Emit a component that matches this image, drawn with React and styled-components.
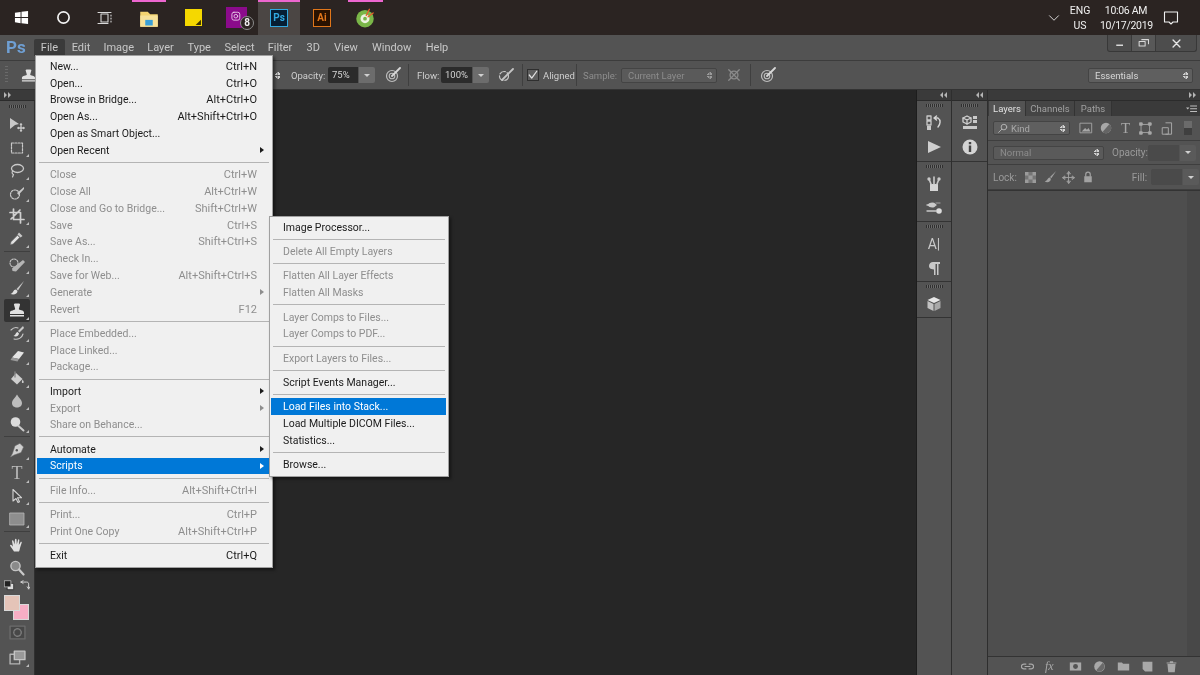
import React from "react";
import styled, { createGlobalStyle } from "styled-components";

const GlobalStyle = createGlobalStyle`
  html, body {
    margin: 0;
    padding: 0;
    background: #262626;
  }
  * {
    box-sizing: border-box;
  }
`;

const UI_FONT = `Roboto, "Noto Sans", "Liberation Sans", sans-serif`;

const Shell = styled.div`
  position: relative;
  width: 1200px;
  height: 675px;
  overflow: hidden;
  display: flex;
  flex-direction: column;
  font-family: ${UI_FONT};
  filter: blur(0.3px);
`;

/* ---------- windows taskbar ---------- */

const Taskbar = styled.div`
  height: 35px;
  flex: none;
  display: flex;
  background: #2b2422;
  color: #f0f0f0;
`;

const TaskSlot = styled.div`
  position: relative;
  width: ${(p) => p.$w}px;
  display: flex;
  align-items: center;
  justify-content: center;
  background: ${(p) => (p.$active ? "#4b4644" : "transparent")};

  &::before {
    content: "";
    display: ${(p) => (p.$bar ? "block" : "none")};
    position: absolute;
    top: 0;
    left: 50%;
    width: ${(p) => p.$bar}px;
    height: 2px;
    margin-left: ${(p) => -p.$bar / 2}px;
    background: #ec66cf;
  }
`;

const Badge = styled.span`
  position: absolute;
  left: 26px;
  top: 16px;
  width: 14px;
  height: 14px;
  border-radius: 50%;
  border: 1px solid #8c8c8c;
  background: #2b2422;
  color: #eee;
  font-size: 10px;
  font-weight: 700;
  line-height: 12px;
  text-align: center;
`;

const AppTile = styled.span`
  width: 18px;
  height: 18px;
  display: block;
  border: 1px solid ${(p) => p.$edge};
  background: ${(p) => p.$bg};
  color: ${(p) => p.$edge};
  font-size: 10px;
  font-weight: 700;
  line-height: 15px;
  text-align: center;
`;

const Tray = styled.div`
  margin-left: auto;
  display: flex;
  align-items: center;
  padding-right: 21px;
  font-size: 10.5px;
  line-height: 15px;
`;

const TrayText = styled.div`
  width: ${(p) => p.$w}px;
  margin-right: ${(p) => p.$mr || 0}px;
  letter-spacing: ${(p) => p.$ls || 0}px;
  text-align: center;
  white-space: nowrap;
`;

/* ---------- photoshop menu bar ---------- */

const MenuBar = styled.div`
  height: 25px;
  flex: none;
  display: flex;
  align-items: flex-start;
  background: #535353;
  color: #c8c8c8;
  font-size: 11px;
`;

const PsLogo = styled.span`
  width: 34px;
  padding: 1px 0 0 6px;
  color: #6f9fd3;
  font-size: 17px;
  font-weight: 700;
  line-height: 22px;
`;

const MenuName = styled.span`
  width: ${(p) => p.$w}px;
  height: 17px;
  margin-top: 4px;
  line-height: 17px;
  text-align: center;
  border-radius: 2px 2px 0 0;
  background: ${(p) => (p.$open ? "#3a3a3a" : "transparent")};
`;

const WindowButtons = styled.div`
  margin: 0 3px 0 auto;
  height: 17px;
  display: flex;
  background: #4d4d4d;
  border: 1px solid #383838;
  border-top: 0;
  border-radius: 0 0 3px 3px;
`;

const WindowButton = styled.span`
  width: ${(p) => p.$w}px;
  display: flex;
  align-items: center;
  justify-content: center;
  border-left: ${(p) => (p.$first ? "0" : "1px solid #3a3a3a")};
  background: ${(p) => (p.$lit ? "#585858" : "transparent")};
`;

/* ---------- options bar ---------- */

const OptionsBar = styled.div`
  height: 30px;
  flex: none;
  display: flex;
  align-items: center;
  background: #535353;
  border-top: 1px solid #3c3c3c;
  border-bottom: 1px solid #333;
  color: #cfcfcf;
  font-size: 9.5px;
`;

const Grip = styled.span`
  width: 3px;
  height: 18px;
  margin-left: 5px;
  background: repeating-linear-gradient(#6a6a6a 0 1px, transparent 1px 3px);
`;

const Option = styled.span`
  width: ${(p) => (p.$w ? `${p.$w}px` : "auto")};
  margin-left: ${(p) => p.$ml}px;
  flex: none;
  display: flex;
  align-items: center;
  color: ${(p) => (p.$dim ? "#8d8d8d" : "inherit")};
  white-space: nowrap;
`;

const ValueBox = styled.span`
  width: ${(p) => p.$w}px;
  height: 16px;
  margin-left: ${(p) => p.$ml || 0}px;
  padding-left: 4px;
  background: ${(p) => (p.$empty ? "#4a4a4a" : "#2b2b2b")};
  color: #d4d4d4;
  line-height: 16px;
  border-radius: 2px 0 0 2px;
`;

const DropButton = styled.span`
  width: 16px;
  height: 16px;
  margin-left: 1px;
  display: flex;
  align-items: center;
  justify-content: center;
  background: ${(p) => (p.$empty ? "#5a5a5a" : "#6c6c6c")};
  border-radius: 0 2px 2px 0;

  &::after {
    content: "";
    border-left: 3px solid transparent;
    border-right: 3px solid transparent;
    border-top: 3px solid #d0d0d0;
  }
`;

const Divider = styled.span`
  width: 1px;
  height: 22px;
  margin-left: ${(p) => p.$ml}px;
  background: #3f3f3f;
`;

const CheckBox = styled.span`
  width: 12px;
  height: 12px;
  margin-left: 4px;
  display: flex;
  align-items: center;
  justify-content: center;
  border: 1px solid #2f2f2f;
  background: #5e5e5e;
`;

const SelectBox = styled.span`
  width: ${(p) => p.$w}px;
  height: ${(p) => p.$h || 15}px;
  margin-left: ${(p) => p.$ml || 0}px;
  padding: 0 4px 0 ${(p) => p.$pad || 6}px;
  display: flex;
  align-items: center;
  justify-content: space-between;
  flex: none;
  border: 1px solid #444;
  border-radius: 2px;
  background: ${(p) => p.$bg || "#5a5a5a"};
  color: ${(p) => (p.$dim ? "#8c8c8c" : "#d8d8d8")};
  white-space: nowrap;
  font-size: 9.5px;
`;

const EndSlot = styled.span`
  margin: 0 7px 0 auto;
`;

const Spinner = styled.span`
  width: 5px;
  height: 9px;
  display: block;
  flex: none;
  opacity: ${(p) => (p.$dim ? 0.55 : 1)};
  background:
    linear-gradient(135deg, transparent 50%, #d0d0d0 50%) left top / 50% 4px no-repeat,
    linear-gradient(225deg, transparent 50%, #d0d0d0 50%) right top / 50% 4px no-repeat,
    linear-gradient(45deg, transparent 50%, #d0d0d0 50%) left bottom / 50% 4px no-repeat,
    linear-gradient(315deg, transparent 50%, #d0d0d0 50%) right bottom / 50% 4px no-repeat;
`;

/* ---------- workspace ---------- */

const Workspace = styled.div`
  flex: 1;
  min-height: 0;
  display: flex;
  background: #2e2e2e;
`;

const Column = styled.div`
  width: ${(p) => p.$w}px;
  flex: none;
  display: flex;
  flex-direction: column;
  margin-left: ${(p) => p.$ml || 0}px;
`;

const Strip = styled.div`
  height: 11px;
  flex: none;
  display: flex;
  align-items: center;
  justify-content: ${(p) => p.$align || "flex-end"};
  padding: 0 4px;
  background: #3a3a3a;
  border-bottom: 1px solid #2b2b2b;
`;

const Toolbar = styled.div`
  flex: 1;
  display: flex;
  flex-direction: column;
  align-items: center;
  background: #535353;
  border-right: 1px solid #303030;
`;

const HGrip = styled.span`
  width: 17px;
  height: 3px;
  flex: none;
  margin: ${(p) => p.$m || "5px 0 5px"};
  background: repeating-linear-gradient(90deg, #2f2f2f 0 1px, #6a6a6a 1px 2px);
`;

const ToolSlot = styled.div`
  position: relative;
  width: 26px;
  height: 22.7px;
  flex: none;
  margin-top: ${(p) => p.$mt || 0}px;
  display: flex;
  align-items: center;
  justify-content: center;
  border-radius: 2px;
  background: ${(p) => (p.$active ? "#333" : "transparent")};

  &::after {
    content: "";
    display: ${(p) => (p.$more ? "block" : "none")};
    position: absolute;
    right: 1px;
    bottom: 2px;
    border-left: 3px solid transparent;
    border-bottom: 3px solid #bdbdbd;
  }
`;

const ToolRule = styled.div`
  width: 26px;
  height: 3px;
  flex: none;
  margin-top: 1px;
  border-top: 1px solid #3f3f3f;
`;

const TypeGlyph = styled.span`
  font-family: "Liberation Serif", serif;
  font-size: ${(p) => p.$size || 18}px;
  line-height: 1;
  color: ${(p) => p.$color || "#b8b8b8"};
`;

const SwatchRow = styled.div`
  width: 26px;
  height: 13px;
  flex: none;
  display: flex;
  align-items: center;
  justify-content: space-between;
`;

const Swatches = styled.div`
  position: relative;
  width: 26px;
  height: 27px;
  flex: none;
  margin-top: 2px;
`;

const Swatch = styled.span`
  position: absolute;
  left: ${(p) => p.$x}px;
  top: ${(p) => p.$y}px;
  width: 16px;
  height: 16px;
  background: ${(p) => p.$bg};
  border: 1px solid #d9d9d9;
`;

const Canvas = styled.main`
  flex: 1;
  background: #262626;
  border-right: 1px solid #1d1d1d;
`;

const DockColumn = styled.div`
  flex: 1;
  display: flex;
  flex-direction: column;
  background: #535353;
`;

const DockGroup = styled.div`
  height: ${(p) => p.$h}px;
  flex: none;
  display: flex;
  flex-direction: column;
  align-items: center;
  border-bottom: 1px solid #333;
`;

const DockIcon = styled.div`
  height: 24px;
  flex: none;
  display: flex;
  align-items: center;
  justify-content: center;
`;

const LayersPanel = styled.div`
  flex: 1;
  display: flex;
  flex-direction: column;
  background: #535353;
  color: #b4b4b4;
  font-size: 10px;
`;

const TabRow = styled.div`
  height: 15px;
  flex: none;
  display: flex;
  align-items: stretch;
  background: #3a3a3a;
  padding-left: 1px;
`;

const Tab = styled.span`
  width: ${(p) => p.$w}px;
  display: flex;
  align-items: center;
  justify-content: center;
  background: ${(p) => (p.$active ? "#535353" : "#454545")};
  color: ${(p) => (p.$active ? "#e2e2e2" : "#a0a0a0")};
  border-right: 1px solid #333;
  font-size: 9.5px;
`;

const PanelRow = styled.div`
  height: ${(p) => p.$h}px;
  flex: none;
  display: flex;
  align-items: center;
  padding-left: 5px;
  border-bottom: 1px solid #3e3e3e;
`;

const PanelIcon = styled.span`
  margin-left: ${(p) => p.$ml}px;
  display: flex;
  opacity: ${(p) => p.$o || 1};
`;

const PanelLabel = styled.span`
  width: ${(p) => (p.$w ? `${p.$w}px` : "auto")};
  margin-left: ${(p) => p.$ml || 0}px;
  color: #9a9a9a;
`;

const MenuGlyph = styled.span`
  margin-left: auto;
  padding: 3px 3px 0 0;
`;

const KindLabel = styled.span`
  display: flex;
  align-items: center;
  gap: 3px;
  color: #a8a8a8;
`;

const FxLabel = styled.span`
  width: 13px;
  color: #a8a8a8;
  font-family: "Liberation Serif", serif;
  font-style: italic;
  font-size: 12px;
`;

const CharGlyph = styled.span`
  color: #c9c9c9;
  font-size: 14px;
  line-height: 1;
`;

const FilterToggle = styled.span`
  width: 8px;
  height: 14px;
  margin-left: 10px;
  background: linear-gradient(#6b6b6b 50%, #3f3f3f 50%);
`;

const ListArea = styled.div`
  flex: 1;
  display: flex;
  justify-content: flex-end;
  background: #4e4e4e;
  border-top: 1px solid #333;
  border-bottom: 1px solid #333;
`;

const ScrollTrack = styled.div`
  width: 13px;
  background: #484848;
`;

const PanelFooter = styled.div`
  height: 18px;
  flex: none;
  display: flex;
  align-items: center;
  padding-left: 33px;
  gap: 11px;
`;

/* ---------- dropdown menus ---------- */

const Dropdown = styled.div`
  position: absolute;
  left: ${(p) => p.$x}px;
  top: ${(p) => p.$y}px;
  width: ${(p) => p.$w}px;
  padding: ${(p) => p.$pt}px 2px 3px 1px;
  background: #f0f0f0;
  border: 1px solid #a0a0a0;
  box-shadow: 2px 2px 3px rgba(0, 0, 0, 0.45);
  font-size: 10.5px;
  color: #1b1b1b;
`;

const Row = styled.div`
  position: relative;
  height: 16.8px;
  display: flex;
  align-items: center;
  justify-content: space-between;
  padding: 0 ${(p) => p.$right}px 0 ${(p) => p.$left}px;
  background: ${(p) => (p.$hi ? "#0078d7" : "transparent")};
  color: ${(p) => (p.$hi ? "#fff" : p.$off ? "#8e8e8e" : "#1b1b1b")};
  white-space: nowrap;
`;

const Shortcut = styled.span`
  font-size: 11px;
`;

const Arrow = styled.span`
  position: absolute;
  right: 6px;
  top: 50%;
  margin-top: -3px;
  border-top: 3px solid transparent;
  border-bottom: 3px solid transparent;
  border-left: 4px solid ${(p) => (p.$hi ? "#fff" : p.$off ? "#8e8e8e" : "#1b1b1b")};
`;

const Rule = styled.div`
  height: 7.5px;
  margin: 0 1px 0 2px;
  display: flex;
  align-items: center;

  &::after {
    content: "";
    flex: 1;
    height: 1px;
    background: #b4b4b4;
  }
`;

/* ---------- drawings ---------- */

const Icon = ({ size = 16, children, fill = "#c9c9c9", stroke = "none", sw = 1.3 }) => (
  <svg width={size} height={size} viewBox="0 0 16 16" fill={fill} stroke={stroke} strokeWidth={sw} strokeLinecap="round" strokeLinejoin="round" style={{ display: "block", flex: "none" }}>
    {children}
  </svg>
);

const Chevrons = ({ left }) => (
  <svg width="7" height="6" viewBox="0 0 7 6" fill="#b5b5b5" style={{ transform: left ? "scaleX(-1)" : "none" }}>
    <path d="M0 0l3 3-3 3zM4 0l3 3-3 3z" />
  </svg>
);

const toolIcons = {
  move: <><path d="M1 1l9 6-4 1-5 4z" /><path d="M12 7v7M9 11h6" stroke="#c9c9c9" /><path d="M12 6l-1.500 2h3zM12 15l-1.500-2h3zM8 11l2-1.500v3zM16 11l-2-1.500v3z" /></>,
  marquee: <rect x="2.500" y="3" width="11" height="10" fill="none" stroke="#c9c9c9" strokeWidth="1.200" strokeDasharray="2 1.300" />,
  lasso: <><ellipse cx="8.500" cy="6.500" rx="6" ry="4" fill="none" stroke="#c9c9c9" strokeWidth="1.300" /><path d="M4 9c-1.500 1-1 3 .5 3.500L3.500 15" fill="none" stroke="#c9c9c9" strokeWidth="1.200" /></>,
  quick: <><circle cx="6" cy="9.500" r="4.500" fill="none" stroke="#c9c9c9" strokeWidth="1.200" strokeDasharray="1.600 1.200" /><path d="M15 2L8 8l1.500 2L15 4z" /></>,
  crop: <path d="M4.500 1v10.500H15M1 4.500h10.500V15M11 2l-9 9" fill="none" stroke="#d0d0d0" strokeWidth="1.700" />,
  eyedropper: <><path d="M10 2.500l3.500 3.500-2 1.500-3-3z" /><path d="M8.500 5.500l2 2L4 14l-2.500.5L2 12z" fill="#e2e2e2" stroke="#777" strokeWidth=".5" /></>,
  heal: <><circle cx="5" cy="6" r="4" fill="none" stroke="#c9c9c9" strokeWidth="1.100" strokeDasharray="1.500 1.200" /><path d="M14 3l2 2-9 9.500-3.500-.5-.5-2.500z" fill="#b5b5b5" /></>,
  brush: <><path d="M15 1L7.500 9l1.500 1.500z" /><path d="M7 9.500c-3 0-2.500 3.500-5.500 4.500 3.500 1 7 0 7-3z" fill="#e0e0e0" /></>,
  stamp: <path d="M6 1.500h4c1 0 1.300 1 .8 2L9.800 7c0 1.500 5.200.8 5.200 3.500V12H1v-1.500C1 8 6.200 8.500 6.200 7L5.200 3.500c-.5-1-.2-2 .8-2zM1 13h14v1.500H1z" fill="#e0e0e0" />,
  history: <><path d="M14 1L9 6l1.500 1.500L15 3z" /><path d="M8.500 7C6.500 7.500 7 10 4.500 11c2.500 1 5 .5 5.500-2.500z" fill="#e0e0e0" /><path d="M2 5c3-3 6-2.500 7-2M5 14c4 1 8-1 9-5" fill="none" stroke="#c9c9c9" strokeWidth="1.100" /></>,
  eraser: <><path d="M9 3l6 1.500L10 11 3 9.500z" fill="#e4e4e4" /><path d="M3 9.500L10 11l-1.500 2.500-7-1.500z" fill="#999" /></>,
  fill: <><path d="M7 3l6.500 6L8 14.500 2 9z" fill="#cfcfcf" /><path d="M13.500 9.500c1 1.500 1.800 2.800.8 3.500-1 .4-1.800-.6-1.300-1.800z" fill="#cfcfcf" /><path d="M6 7V2" stroke="#888" /></>,
  drop: <path d="M8 1.500c1.500 3 5 5.500 5 8.500 0 3-2.300 4.500-5 4.500S3 13 3 10c0-3 3.500-5.500 5-8.500z" fill="#bdbdbd" />,
  burn: <><circle cx="6.500" cy="6" r="4.800" fill="#dcdcdc" /><path d="M9.500 10l5 4.500" stroke="#c9c9c9" strokeWidth="2" /></>,
  pen: <><path d="M11 1.500l3.500 3.500-2.500 5.500L5 13 1.500 15l2-3.500L6 4z" fill="#cfcfcf" stroke="#777" strokeWidth=".5" /><circle cx="7.800" cy="8.200" r="1.200" fill="#555" /></>,
  arrow: <path d="M4 1.500v11.500l3-2.500 2 4 1.500-.8-2-4h4z" fill="#4a4a4a" stroke="#d5d5d5" strokeWidth="1.100" />,
  shape: <rect x="1" y="2" width="14" height="12" fill="#8e8e8e" stroke="#b8b8b8" strokeWidth=".8" />,
  hand: <path d="M5 14.500C4 12.500 1.500 10 1 8.500c0-1 1.200-1 2 0l1 1.200L3 4c0-1 1.200-1 1.500 0l1 3.500L6 2.500c.2-1 1.400-1 1.500 0l.3 5L9 3c.3-1 1.400-.8 1.300.2L9.800 8l1.700-2.800c.5-.8 1.600-.3 1.200.6L11 11c-.3 1.500-.5 2.500-1 3.500z" fill="#e0e0e0" />,
  zoom: <><circle cx="6.500" cy="6" r="4.600" fill="#8a8a8a" stroke="#c4c4c4" strokeWidth="1.400" /><path d="M10 9.500l4.500 5" stroke="#c9c9c9" strokeWidth="2.200" /></>,
};

const dockIcons = {
  history: <><path d="M1 1h4v4H1zM1 6h4v4H1z" fill="none" stroke="#c9c9c9" /><path d="M1 11h4v4H1z" fill="#c9c9c9" /><path d="M8 3h4c3 2 2.500 6 0 9M8 3l2.500-2M8 3l2.500 2" fill="none" stroke="#d5d5d5" strokeWidth="1.400" /></>,
  play: <path d="M2 2l13 6-13 6z" fill="#cfcfcf" />,
  box: <><path d="M5 1l4 2v4L5 9 1 7V3z" fill="none" stroke="#d0d0d0" /><path d="M1 3l4 2 4-2M5 5v4" fill="none" stroke="#d0d0d0" /><path d="M11 1h4v3h-4zM11 5h4v3h-4z" /><path d="M1 11h14v3H1z" /></>,
  info: <><circle cx="8" cy="8" r="7.500" fill="#d4d4d4" /><path d="M6.800 3h2.400v2.200H6.800zM6.800 6.500h2.400V13H6.800z" fill="#444" /></>,
  brushes: <><path d="M4 8h8v7H4z" fill="#d5d5d5" /><path d="M5 8L3 3M8 8V1M11 8l2-5" stroke="#c9c9c9" strokeWidth="1.600" /><circle cx="3" cy="3" r="1.700" /><circle cx="13" cy="3" r="1.700" /></>,
  presets: <><path d="M7 5H1M2 5c2-2 4-2 6-1.500L10 5 8 6.500C6 7 4 7 2 5z" stroke="#c9c9c9" /><path d="M1 11h9" stroke="#c9c9c9" strokeWidth="1.300" /><circle cx="13" cy="11" r="2.800" fill="#dcdcdc" /><path d="M10 3h4" stroke="#888" /></>,
  para: <path d="M7 2h7v2h-1.500v11H11V4H9.500v11H8V9.500C4 9.500 3 7.500 3 5.800 3 3.500 5 2 7 2z" fill="#c9c9c9" />,
  cube: <><path d="M8 1l6.500 3L8 7 1.500 4z" fill="#e6e6e6" /><path d="M1.500 5L7.500 8v7l-6-3z" fill="#c2c2c2" /><path d="M14.500 5L8.500 8v7l6-3z" fill="#a8a8a8" /></>,
};

const menuItems = [
  { t: "New...", k: "Ctrl+N" },
  { t: "Open...", k: "Ctrl+O" },
  { t: "Browse in Bridge...", k: "Alt+Ctrl+O" },
  { t: "Open As...", k: "Alt+Shift+Ctrl+O" },
  { t: "Open as Smart Object..." },
  { t: "Open Recent", sub: true },
  "-",
  { t: "Close", k: "Ctrl+W", off: true },
  { t: "Close All", k: "Alt+Ctrl+W", off: true },
  { t: "Close and Go to Bridge...", k: "Shift+Ctrl+W", off: true },
  { t: "Save", k: "Ctrl+S", off: true },
  { t: "Save As...", k: "Shift+Ctrl+S", off: true },
  { t: "Check In...", off: true },
  { t: "Save for Web...", k: "Alt+Shift+Ctrl+S", off: true },
  { t: "Generate", sub: true, off: true },
  { t: "Revert", k: "F12", off: true },
  "-",
  { t: "Place Embedded...", off: true },
  { t: "Place Linked...", off: true },
  { t: "Package...", off: true },
  "-",
  { t: "Import", sub: true },
  { t: "Export", sub: true, off: true },
  { t: "Share on Behance...", off: true },
  "-",
  { t: "Automate", sub: true },
  { t: "Scripts", sub: true, hi: true },
  "-",
  { t: "File Info...", k: "Alt+Shift+Ctrl+I", off: true },
  "-",
  { t: "Print...", k: "Ctrl+P", off: true },
  { t: "Print One Copy", k: "Alt+Shift+Ctrl+P", off: true },
  "-",
  { t: "Exit", k: "Ctrl+Q" },
];

const scriptItems = [
  { t: "Image Processor..." },
  "-",
  { t: "Delete All Empty Layers", off: true },
  "-",
  { t: "Flatten All Layer Effects", off: true },
  { t: "Flatten All Masks", off: true },
  "-",
  { t: "Layer Comps to Files...", off: true },
  { t: "Layer Comps to PDF...", off: true },
  "-",
  { t: "Export Layers to Files...", off: true },
  "-",
  { t: "Script Events Manager..." },
  "-",
  { t: "Load Files into Stack...", hi: true },
  { t: "Load Multiple DICOM Files..." },
  { t: "Statistics..." },
  "-",
  { t: "Browse..." },
];

const menuNames = [
  ["File", 31, true],
  ["Edit", 32],
  ["Image", 43.5],
  ["Layer", 40],
  ["Type", 37.5],
  ["Select", 43],
  ["Filter", 38],
  ["3D", 28.5],
  ["View", 37],
  ["Window", 54.5],
  ["Help", 36],
];

const toolGroups = [
  ["move", "marquee", "lasso", "quick", "crop", "eyedropper"],
  ["heal", "brush", "stamp", "history", "eraser", "fill", "drop", "burn"],
  ["pen", "type", "arrow", "shape"],
  ["hand", "zoom"],
];
const noCorner = ["move", "hand", "zoom"];

const MenuRows = ({ items, left, right }) =>
  items.map((item, i) =>
    item === "-" ? (
      <Rule key={i} />
    ) : (
      <Row key={i} $left={left} $right={right} $off={item.off} $hi={item.hi}>
        <span>{item.t}</span>
        {item.k && <Shortcut>{item.k}</Shortcut>}
        {item.sub && <Arrow $hi={item.hi} $off={item.off} />}
      </Row>
    )
  );

const Target = () => (
  <Icon size={16}>
    <circle cx="7" cy="9" r="5.500" fill="none" stroke="#bdbdbd" strokeWidth="1.200" />
    <circle cx="7" cy="9" r="2.800" fill="none" stroke="#bdbdbd" strokeWidth="1.100" />
    <path d="M7 9l8-8" stroke="#d8d8d8" strokeWidth="1.800" />
  </Icon>
);

export default function App() {
  return (
    <Shell>
      <GlobalStyle />

      <Taskbar>
        <TaskSlot $w={42}>
          <Icon size={15} fill="#fff">
            <path d="M1 3l6-1v5.500H1zM8 1.800L15 1v6.500H8zM1 8.500h6V14l-6-1zM8 8.500h7V15l-7-1z" />
          </Icon>
        </TaskSlot>
        <TaskSlot $w={42}>
          <Icon size={15} fill="none" stroke="#f2f2f2" sw={1.800}>
            <circle cx="8" cy="8" r="6" />
          </Icon>
        </TaskSlot>
        <TaskSlot $w={42}>
          <Icon size={16} fill="none" stroke="#d8d8d8" sw={1.100}>
            <path d="M4 4h7v8H4zM1 2.500h13M1 13.500h10M14 5v1M14 8v1M14 11v1" />
          </Icon>
        </TaskSlot>
        <TaskSlot $w={46} $bar={34}>
          <Icon size={20} fill="#f4d470">
            <path d="M1 3h6l2 2h6v10H1z" />
            <path d="M1 6h14v9H1z" fill="#f7e29a" />
            <path d="M5 9.500h6V14H5z" fill="#3aa0d8" />
          </Icon>
        </TaskSlot>
        <TaskSlot $w={42}>
          <Icon size={17} fill="#f5d800">
            <path d="M0 0h16v16H0z" />
            <path d="M10 15l5-5v5z" fill="#3a3200" />
          </Icon>
        </TaskSlot>
        <TaskSlot $w={44}>
          <Icon size={21} fill="#8b0b8b">
            <path d="M0 0h16v16H0z" />
            <rect x="4.500" y="4" width="6" height="6" rx="1.500" fill="none" stroke="#e8c8e8" strokeWidth=".7" />
            <circle cx="7.500" cy="7" r="1.400" fill="none" stroke="#e8c8e8" strokeWidth=".7" />
          </Icon>
          <Badge>8</Badge>
        </TaskSlot>
        <TaskSlot $w={42} $active $bar={42}>
          <AppTile $bg="#061e33" $edge="#31a8e0">Ps</AppTile>
        </TaskSlot>
        <TaskSlot $w={44}>
          <AppTile $bg="#2a1200" $edge="#e0761a">Ai</AppTile>
        </TaskSlot>
        <TaskSlot $w={42} $bar={35}>
          <Icon size={20} fill="#7ab648">
            <circle cx="8" cy="8.500" r="7" />
            <circle cx="8" cy="8.500" r="3.600" fill="#eef3e2" />
            <circle cx="8" cy="8.500" r="1.500" fill="#7ab648" />
            <path d="M9 6l2.500-5M10.500 7l4-3" stroke="#e8602c" strokeWidth="1.100" />
          </Icon>
        </TaskSlot>
        <Tray>
          <Icon size={12} fill="none" stroke="#e6e6e6" sw={1.200}>
            <path d="M2 5l6 6 6-6" />
          </Icon>
          <TrayText $w={40}>ENG<br />US</TrayText>
          <TrayText $w={52} $mr={11} $ls={-0.3}>10:06 AM<br />10/17/2019</TrayText>
          <Icon size={16} fill="none" stroke="#f0f0f0" sw={1.100}>
            <path d="M1.500 2h13v10H10l-2 2-2-2H1.500z" />
          </Icon>
        </Tray>
      </Taskbar>

      <MenuBar>
        <PsLogo>Ps</PsLogo>
        {menuNames.map(([name, w, open]) => (
          <MenuName key={name} $w={w} $open={open}>{name}</MenuName>
        ))}
        <WindowButtons>
          <WindowButton $w={23} $first>
            <Icon size={12} fill="#d8d8d8"><path d="M3 10h9v2H3z" /></Icon>
          </WindowButton>
          <WindowButton $w={24} $lit>
            <Icon size={12} fill="none" stroke="#d8d8d8" sw={1.400}><path d="M1.500 6h8v6h-8zM5 3.500h9V9" /></Icon>
          </WindowButton>
          <WindowButton $w={41}>
            <Icon size={11} fill="none" stroke="#e4e4e4" sw={2}><path d="M3 3l10 10M13 3L3 13" /></Icon>
          </WindowButton>
        </WindowButtons>
      </MenuBar>

      <OptionsBar>
        <Grip />
        <Option $ml={13} $w={15}>
          <Icon size={15}>{toolIcons.stamp}</Icon>
        </Option>
        <Option $ml={239} $w={5}>
          <Spinner />
        </Option>
        <Option $ml={11} $w={37}>Opacity:</Option>
        <ValueBox $w={30}>75%</ValueBox>
        <DropButton />
        <Option $ml={10} $w={16}><Target /></Option>
        <Divider $ml={7} />
        <Option $ml={8} $w={24}>Flow:</Option>
        <ValueBox $w={31}>100%</ValueBox>
        <DropButton />
        <Option $ml={9} $w={16}>
          <Icon size={16} fill="none" stroke="#c4c4c4" sw={1.200}>
            <circle cx="6" cy="9" r="4.500" strokeDasharray="6 2" />
            <path d="M4 13L15 2" strokeWidth="1.800" />
          </Icon>
        </Option>
        <Divider $ml={8} />
        <CheckBox>
          <Icon size={10} fill="none" stroke="#e2e2e2" sw={2}><path d="M2 8l4 5 8-11" /></Icon>
        </CheckBox>
        <Option $ml={4} $w={29}>Aligned</Option>
        <Divider $ml={4} />
        <Option $ml={6} $w={38} $dim>Sample:</Option>
        <SelectBox $w={96} $dim>
          Current Layer<Spinner $dim />
        </SelectBox>
        <Option $ml={10} $w={14}>
          <Icon size={14} fill="none" stroke="#8a8a8a" sw={1.500}>
            <circle cx="8" cy="8" r="4.500" />
            <path d="M2 2l12 12M14 2L2 14" />
          </Icon>
        </Option>
        <Divider $ml={9} />
        <Option $ml={9} $w={16}><Target /></Option>
        <EndSlot>
          <SelectBox $w={105} $bg="#5f5f5f">
            Essentials<Spinner />
          </SelectBox>
        </EndSlot>
      </OptionsBar>

      <Workspace>
        <Column $w={35}>
          <Strip $align="flex-start"><Chevrons /></Strip>
          <Toolbar>
            <HGrip $m="4px 0 5.500px" />
            {toolGroups.map((group, g) => (
              <React.Fragment key={g}>
                {g > 0 && <ToolRule />}
                {group.map((name) => (
                  <ToolSlot key={name} $active={name === "stamp"} $more={!noCorner.includes(name)}>
                    {name === "type" ? <TypeGlyph>T</TypeGlyph> : <Icon>{toolIcons[name]}</Icon>}
                  </ToolSlot>
                ))}
              </React.Fragment>
            ))}
            <SwatchRow>
              <Icon size={11} fill="#222" stroke="#d0d0d0" sw={1}>
                <path d="M5 5h9v9H5z" fill="#ddd" stroke="#222" />
                <path d="M1 1h9v9H1z" />
              </Icon>
              <Icon size={11} fill="none" stroke="#d5d5d5" sw={1.400}>
                <path d="M3 3h8c2 0 3 1 3 3v6M3 3l3-2M3 3l3 2M14 13l-2-3M14 13l2-3" />
              </Icon>
            </SwatchRow>
            <Swatches>
              <Swatch $x={9} $y={10} $bg="#f7aec5" />
              <Swatch $x={0} $y={1} $bg="#e5c4b8" />
            </Swatches>
            <ToolSlot>
              <Icon size={17}>
                <rect x="1" y="2" width="14" height="12" fill="#474747" stroke="#6c6c6c" />
                <circle cx="8" cy="8" r="3.500" fill="none" stroke="#7d7d7d" strokeDasharray="1.500 1" />
              </Icon>
            </ToolSlot>
            <ToolSlot $more $mt={2}>
              <Icon size={17}>
                <rect x="1" y="5" width="9" height="9" fill="#555" stroke="#b4b4b4" />
                <rect x="5" y="2" width="10" height="8" fill="#999" stroke="#c4c4c4" />
              </Icon>
            </ToolSlot>
          </Toolbar>
        </Column>

        <Canvas />

        <Column $w={34}>
          <Strip><Chevrons left /></Strip>
          <DockColumn>
            <DockGroup $h={61}>
              <HGrip $m="3px 0 4px" />
              <DockIcon><Icon>{dockIcons.history}</Icon></DockIcon>
              <DockIcon><Icon>{dockIcons.play}</Icon></DockIcon>
            </DockGroup>
            <DockGroup $h={60}>
              <HGrip $m="3px 0 4px" />
              <DockIcon><Icon>{dockIcons.brushes}</Icon></DockIcon>
              <DockIcon><Icon>{dockIcons.presets}</Icon></DockIcon>
            </DockGroup>
            <DockGroup $h={60}>
              <HGrip $m="3px 0 4px" />
              <DockIcon><CharGlyph>A|</CharGlyph></DockIcon>
              <DockIcon><Icon>{dockIcons.para}</Icon></DockIcon>
            </DockGroup>
            <DockGroup $h={36}>
              <HGrip $m="3px 0 4px" />
              <DockIcon><Icon>{dockIcons.cube}</Icon></DockIcon>
            </DockGroup>
          </DockColumn>
        </Column>

        <Column $w={35} $ml={1}>
          <Strip><Chevrons left /></Strip>
          <DockColumn>
            <DockGroup $h={61}>
              <HGrip $m="3px 0 4px" />
              <DockIcon><Icon>{dockIcons.box}</Icon></DockIcon>
              <DockIcon><Icon>{dockIcons.info}</Icon></DockIcon>
            </DockGroup>
          </DockColumn>
        </Column>

        <Column $w={212} $ml={1}>
          <Strip><Chevrons /></Strip>
          <LayersPanel>
            <TabRow>
              <Tab $w={37} $active>Layers</Tab>
              <Tab $w={49}>Channels</Tab>
              <Tab $w={37}>Paths</Tab>
              <MenuGlyph>
                <Icon size={11} fill="#bdbdbd">
                  <path d="M0 5h5L2.500 8zM6 2h10v1.500H6zM6 6h10v1.500H6zM6 10h10v1.500H6z" />
                </Icon>
              </MenuGlyph>
            </TabRow>
            <PanelRow $h={25}>
              <SelectBox $w={77} $pad={4} $bg="#5f5f5f" $h={14}>
                <KindLabel>
                  <Icon size={10} fill="none" stroke="#b0b0b0" sw={1.600}>
                    <circle cx="9.500" cy="6.500" r="4.500" /><path d="M6 10l-5 5" />
                  </Icon>
                  Kind
                </KindLabel>
                <Spinner />
              </SelectBox>
              <PanelIcon $ml={9} $o={0.8}>
                <Icon size={14} fill="none" stroke="#bdbdbd" sw={1}>
                  <rect x="1.500" y="2.500" width="13" height="11" />
                  <path d="M3 12l4-4 2 2 2-2 2 4z" fill="#bdbdbd" stroke="none" />
                </Icon>
              </PanelIcon>
              <PanelIcon $ml={6} $o={0.8}>
                <Icon size={14} fill="#bdbdbd"><circle cx="8" cy="8" r="6" /><path d="M12 3.500A6 6 0 0 1 4 12.500z" fill="#6a6a6a" /></Icon>
              </PanelIcon>
              <PanelIcon $ml={8} $o={0.8}><TypeGlyph $size={15} $color="#bdbdbd">T</TypeGlyph></PanelIcon>
              <PanelIcon $ml={9} $o={0.8}>
                <Icon size={13} fill="none" stroke="#bdbdbd" sw={1.100}>
                  <rect x="3" y="3" width="10" height="10" />
                  <path d="M1 1h3v3H1zM12 1h3v3h-3zM1 12h3v3H1zM12 12h3v3h-3z" fill="#bdbdbd" />
                </Icon>
              </PanelIcon>
              <PanelIcon $ml={9} $o={0.8}>
                <Icon size={13} fill="none" stroke="#bdbdbd" sw={1.200}>
                  <path d="M6 1h7v14H6M2 7h7v8H2z" />
                </Icon>
              </PanelIcon>
              <FilterToggle />
            </PanelRow>
            <PanelRow $h={24}>
              <SelectBox $w={111} $dim $bg="#5a5a5a" $h={14}>
                Normal<Spinner />
              </SelectBox>
              <PanelLabel $ml={8} $w={36}>Opacity:</PanelLabel>
              <ValueBox $w={31} $empty />
              <DropButton $empty />
            </PanelRow>
            <PanelRow $h={25}>
              <PanelLabel>Lock:</PanelLabel>
              <PanelIcon $ml={8} $o={0.85}>
                <Icon size={11} fill="#a8a8a8">
                  <path d="M0 0h16v16H0z" fill="#7c7c7c" />
                  <path d="M0 0h5v5H0zM11 0h5v5h-5zM5 5h6v6H5zM0 11h5v5H0zM11 11h5v5h-5z" />
                </Icon>
              </PanelIcon>
              <PanelIcon $ml={7} $o={0.85}>
                <Icon size={14} fill="#b0b0b0"><path d="M15 1L8 8l1.500 1.500zM7.500 8.500C5 9 5.500 12 2 13c3 2 7 .5 7-3z" /></Icon>
              </PanelIcon>
              <PanelIcon $ml={5} $o={0.85}>
                <Icon size={13} fill="none" stroke="#b0b0b0" sw={1.100}>
                  <path d="M8 1v14M1 8h14M8 1L6 3.500h4zM8 15l-2-2.500h4zM1 8l2.500-2v4zM15 8l-2.500-2v4z" />
                </Icon>
              </PanelIcon>
              <PanelIcon $ml={7} $o={0.85}>
                <Icon size={12} fill="#b0b0b0">
                  <path d="M3 7h10v8H3z" /><path d="M5 7V4.500a3 3 0 0 1 6 0V7" fill="none" stroke="#b0b0b0" strokeWidth="1.600" />
                </Icon>
              </PanelIcon>
              <PanelLabel $ml={38} $w={19}>Fill:</PanelLabel>
              <ValueBox $w={31} $empty />
              <DropButton $empty />
            </PanelRow>
            <ListArea><ScrollTrack /></ListArea>
            <PanelFooter>
              <Icon size={13} fill="none" stroke="#a8a8a8" sw={1.500}>
                <path d="M6 5H3.500a3 3 0 0 0 0 6H6M10 5h2.500a3 3 0 0 1 0 6H10M5 8h6" />
              </Icon>
              <FxLabel>fx</FxLabel>
              <Icon size={13} fill="#a8a8a8"><path d="M1 3h14v10H1z" /><circle cx="8" cy="8" r="3" fill="#535353" /></Icon>
              <Icon size={13} fill="#a8a8a8"><circle cx="8" cy="8" r="6.500" /><path d="M12 3.500A6 6 0 0 1 4 12.500z" fill="#6a6a6a" /></Icon>
              <Icon size={13} fill="#a8a8a8"><path d="M1 3h5l1.500 1.500H15V13H1z" /></Icon>
              <Icon size={13} fill="#a8a8a8"><path d="M2 2h12v12H5l-3-3zM2 11h3v3z" /></Icon>
              <Icon size={13} fill="#a8a8a8"><path d="M3 5h10l-1 10H4zM2 3h12v1.300H2zM6 1.500h4V3H6z" /></Icon>
            </PanelFooter>
          </LayersPanel>
        </Column>
      </Workspace>

      <Dropdown $x={35} $y={55} $w={238} $pt={2}>
        <MenuRows items={menuItems} left={13} right={13} />
      </Dropdown>
      <Dropdown $x={269} $y={216} $w={180} $pt={2}>
        <MenuRows items={scriptItems} left={12} right={14} />
      </Dropdown>
    </Shell>
  );
}
